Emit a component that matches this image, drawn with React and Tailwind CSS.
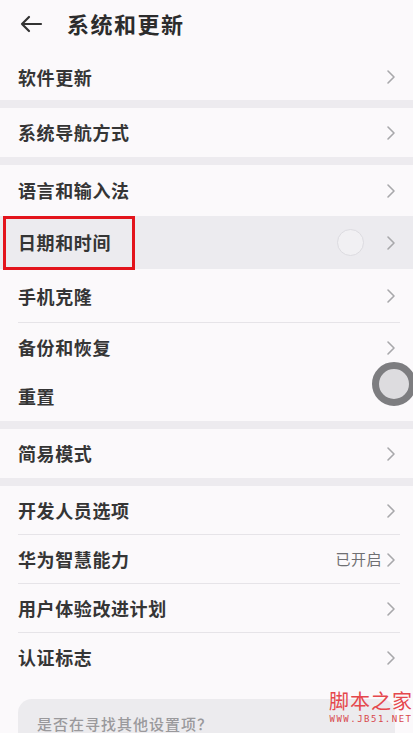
import React from "react";

const font = { fontFamily: '"Noto Sans CJK SC", "Noto Sans", sans-serif' };

function Chevron() {
  return (
    <svg width="10" height="16" viewBox="0 0 10 16" className="shrink-0">
      <path d="M2 2 L8 8 L2 14" fill="none" stroke="#a8a8ab" strokeWidth="1.6" strokeLinecap="round" strokeLinejoin="round" />
    </svg>
  );
}

function Row({ label, h = "h-[49px]", right, bg = "", divider = false, children, chevron = true }) {
  return (
    <div className={`relative flex items-center pl-[18px] pr-[17px] ${h} ${bg}`}>
      <span className="flex-1 text-[18px] font-semibold tracking-[0.6px] text-[#353535]">{label}</span>
      {right}
      {chevron && <Chevron />}
      {children}
      {divider && <div className="absolute bottom-0 left-[18px] right-[13px] h-px bg-[#e6e4e8]" />}
    </div>
  );
}

function Gap() {
  return <div className="h-[8px] bg-[#edebef]" />;
}

export default function App() {
  return (
    <div className="relative w-[413px] h-[733px] overflow-hidden bg-[#fbf9fb]" style={font}>
      {/* header */}
      <div className="flex items-center h-[54px] pl-[19px] pb-[7px]">
        <svg width="24" height="20" viewBox="0 0 24 20">
          <path d="M22 10 H3 M10 3 L3 10 L10 17" fill="none" stroke="#333" strokeWidth="2.2" strokeLinecap="round" strokeLinejoin="round" />
        </svg>
        <span className="ml-[24px] text-[22px] font-bold tracking-[1.5px] text-[#2c2c2c]">系统和更新</span>
      </div>

      <Row label="软件更新" h="h-[46px]" />
      <Gap />
      <Row label="系统导航方式" />
      <Gap />
      <Row label="语言和输入法" h="h-[51px]" />
      <Row
        label="日期和时间"
        h="h-[53px]"
        bg="bg-[#ecebef]"
        right={<div className="mr-[22px] h-[27px] w-[27px] rounded-full border border-[#dcdbe0] bg-[#f1f0f3]" />}
      >
        <div className="absolute left-[3px] top-0 h-[54px] w-[132px] border-[3px] border-[#e3141c]" />
      </Row>
      <Row label="手机克隆" h="h-[54px]" divider />
      <Row label="备份和恢复" />
      <Row label="重置" chevron={false} />
      <Gap />
      <Row label="简易模式" />
      <Gap />
      <Row label="开发人员选项" divider />
      <Row
        label="华为智慧能力"
        divider
        right={<span className="mr-[4px] text-[15px] tracking-[0.5px] text-[#6f6f72]">已开启</span>}
      />
      <Row label="用户体验改进计划" divider />
      <Row label="认证标志" />

      <div className="mt-[17px] mx-[18px] h-[60px] rounded-[14px] bg-[#ecebee] pl-[19px] pt-[12px]">
        <span className="text-[15px] font-medium tracking-[1px] leading-[20px] text-[#9a999c]">是否在寻找其他设置项？</span>
      </div>

      {/* touch indicator */}
      <div className="absolute left-[372px] top-[362px] h-[44px] w-[44px] rounded-full border-[7px] border-[#7d7d80] bg-[#dddcdf]" />

      {/* watermark */}
      <div className="absolute left-[329px] top-[689px] flex flex-col items-center">
        <span className="text-[20px] leading-[24px] tracking-[1px] text-[#e5474c]">脚本之家</span>
        <span className="text-[9px] leading-[12px] tracking-[1.5px] text-[#d8484c]" style={{ fontFamily: '"DejaVu Sans Mono", monospace' }}>WWW.JB51.NET</span>
      </div>
    </div>
  );
}
